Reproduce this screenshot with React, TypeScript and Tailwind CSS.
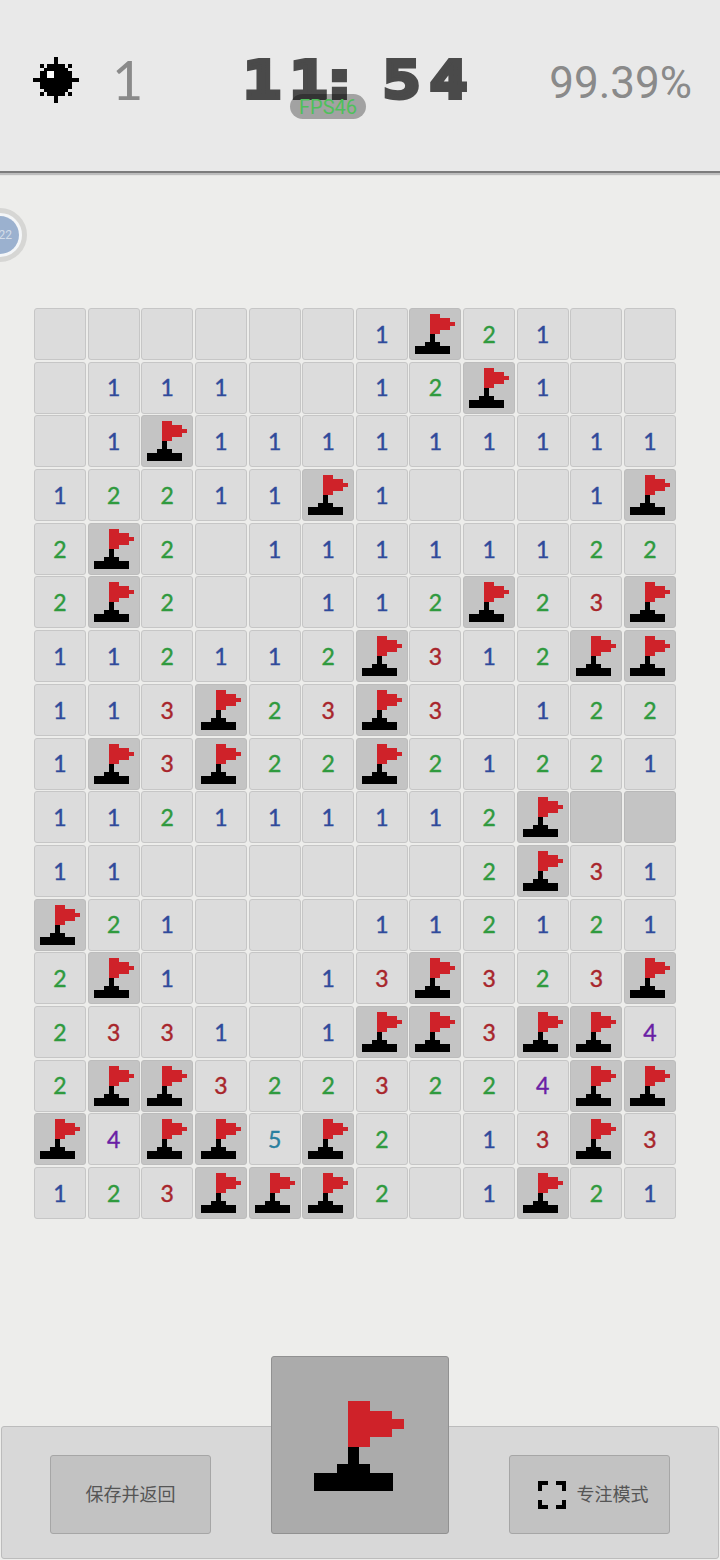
import React from 'react';

const BOARD = [
  '______1F21__',
  '_111__12F1__',
  '_1F111111111',
  '12211F1___1F',
  '2F2_11111122',
  '2F2__112F23F',
  '112112F312FF',
  '113F23F3_122',
  '1F3F22F21221',
  '112111112FUU',
  '11______2F31',
  'F21___112121',
  '2F1__13F323F',
  '2331_1FF3FF4',
  '2FF3223224FF',
  'F4FF5F2_13F3',
  '123FFF2_1F21',
];

const DIGIT_COLOR: Record<string, string> = {
  '1': 'text-[#2f4a9b]',
  '2': 'text-[#2f9a3e]',
  '3': 'text-[#a8252b]',
  '4': 'text-[#6a1fa5]',
  '5': 'text-[#2a7f9f]',
};

const MINE_ROWS = [
  [6, 6], [6, 6], [2, 2, 4, 8, 10, 10], [3, 9], [2, 10], [2, 10],
  [0, 12],
  [2, 10], [2, 10], [3, 9], [2, 2, 4, 8, 10, 10], [6, 6], [6, 6],
];

function Flag({ size }: { size: number }) {
  return (
    <svg width={size} height={size} viewBox="0 0 90 90" shapeRendering="crispEdges">
      <rect x="34" y="0" width="22" height="46" fill="#cf2229" />
      <rect x="56" y="10" width="22" height="26" fill="#cf2229" />
      <rect x="78" y="18" width="12" height="10" fill="#cf2229" />
      <rect x="34" y="46" width="11" height="18" fill="#000" />
      <rect x="23" y="63" width="33" height="10" fill="#000" />
      <rect x="0" y="72" width="79" height="18" fill="#000" />
    </svg>
  );
}

function Mine() {
  return (
    <svg width="46" height="46" viewBox="0 0 13 13" shapeRendering="crispEdges">
      {MINE_ROWS.map((spans, y) =>
        spans.reduce<React.ReactNode[]>((acc, _, i) => {
          if (i % 2 === 0) {
            acc.push(<rect key={`${y}-${i}`} x={spans[i]} y={y} width={spans[i + 1] - spans[i] + 1} height="1" fill="#000" />);
          }
          return acc;
        }, []),
      )}
      <rect x="4" y="4" width="2" height="2" fill="#fff" />
    </svg>
  );
}

function FocusIcon() {
  return (
    <svg width="28" height="28" viewBox="0 0 28 28" fill="none" stroke="#000" strokeWidth="4">
      <path d="M10 2H2V10M18 2H26V10M2 19V26H10M26 19V26H18" />
    </svg>
  );
}

function Cell({ value }: { value: string }) {
  if (value === 'F') {
    return (
      <div className="h-[52px] flex items-center justify-center rounded-[3px] bg-[#c4c4c4] border border-[#bcbcbc]">
        <Flag size={40} />
      </div>
    );
  }
  if (value === 'U') {
    return <div className="h-[52px] rounded-[3px] bg-[#c4c4c4] border border-[#b8b8b8]" />;
  }
  return (
    <div className={`h-[52px] flex items-center justify-center rounded-[3px] bg-[#dcdcdc] border border-[#c6c6c6] font-['Lato'] text-[23px] [-webkit-text-stroke:0.4px] ${DIGIT_COLOR[value] ?? ''}`}>
      {value === '_' ? '' : value}
    </div>
  );
}

export default function App() {
  return (
    <div className="relative w-[720px] h-[1560px] overflow-hidden bg-[#ededeb] font-['Roboto','Noto_Sans_CJK_SC',sans-serif] flex flex-col">
      <header className="h-[173px] shrink-0 bg-[#e9e9e9] border-b-2 border-[#7c7c7c] shadow-[0_2px_1px_#bdbdbd] flex items-start">
        <div className="w-[243px] h-[160px] pl-[33px] flex items-center gap-[33px]">
          <Mine />
          <span className="font-['Lato'] text-[54px] leading-none text-[#8a8a8a]">1</span>
        </div>
        <div className="relative w-[260px] h-[160px] flex items-center">
          <span className="origin-left scale-x-[1.21] font-['DejaVu_Sans_Mono'] font-bold text-[52px] leading-none tracking-[7.2px] text-[#4a4a4a] [-webkit-text-stroke:4px_#4a4a4a]">
            11<span className="inline-block -ml-[13px] mr-[13px]">:</span>54
          </span>
          <div className="absolute left-[47px] top-[94px] w-[76px] h-[25px] rounded-full bg-black/30 flex items-center justify-center text-[20px] leading-none text-[#4fc05b]">
            FPS46
          </div>
        </div>
        <div className="ml-auto pr-[28px] h-[166px] flex items-center text-[44px] leading-none text-[#8a8a8a]">
          99.39%
        </div>
      </header>

      <div className="absolute -left-[27px] top-[208px] w-[54px] h-[54px] rounded-full border-[5px] border-[#d6d6d4] bg-[#f4f6f8] p-[3px]">
        <div className="w-full h-full rounded-full bg-[#9bb1cf] flex items-center justify-end pr-[7px] text-[12px] text-[#d3dde9]">
          22
        </div>
      </div>

      <main className="pt-[135px] pl-[34px] w-[676px] shrink-0">
        <div className="grid grid-cols-12 gap-x-[1.6px] gap-y-[1.7px]">
          {BOARD.map((row, y) => row.split('').map((value, x) => <Cell key={`${y}-${x}`} value={value} />))}
        </div>
      </main>

      <footer className="mt-[207px] mx-[1px] h-[133px] shrink-0 rounded-[3px] bg-[#d8d8d8] border border-[#bcbcbc] flex items-start justify-between px-[48px]">
        <button className="mt-[28px] w-[161px] h-[79px] rounded-[3px] bg-[#c2c2c2] border border-[#a6a6a6] text-[18px] text-[#555]">
          保存并返回
        </button>
        <button className="-mt-[71px] w-[178px] h-[178px] rounded-[3px] bg-[#ababab] border border-[#919191] flex items-center justify-center pr-[2px] pt-[2px]">
          <Flag size={90} />
        </button>
        <button className="mt-[28px] w-[161px] h-[79px] rounded-[3px] bg-[#c2c2c2] border border-[#a6a6a6] flex items-center justify-center gap-[11px] pl-[7px] text-[18px] text-[#555]">
          <FocusIcon />
          专注模式
        </button>
      </footer>
    </div>
  );
}
